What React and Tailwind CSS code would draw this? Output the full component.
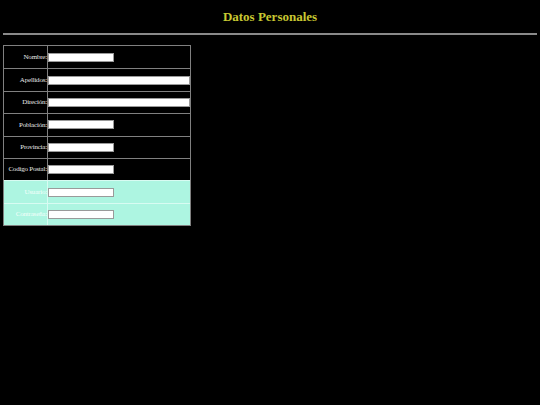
const fields = [
  { label: "Nombre:", wide: false },
  { label: "Apellidos:", wide: true },
  { label: "Direción:", wide: true },
  { label: "Población:", wide: false },
  { label: "Provincia:", wide: false },
  { label: "Codigo Postal:", wide: false },
  { label: "Usuario:", wide: false, alt: true },
  { label: "Contraseña:", wide: false, alt: true, pass: true },
];

export default function App() {
  return (
    <div className="min-h-screen w-full bg-black font-['Liberation_Serif',serif] text-white">
      <h1 className="pt-[9px] text-center text-[13px] font-bold leading-[16px] text-[#c8c832]">
        Datos Personales
      </h1>
      <hr className="mx-[3px] mt-[8px] border-t-2 border-[#8a8a8a]" />

      <div className="ml-[3px] mt-[10px] w-[188px] border border-[#808080]">
        {fields.map((f, i) => (
          <div
            key={f.label}
            className={`flex h-[22.4px] ${i > 0 ? "border-t" : ""} ${
              f.alt ? "border-[#d8fbf2] bg-[#adf5e1]" : "border-[#808080]"
            }`}
          >
            <div
              className={`flex w-[44px] shrink-0 items-center justify-end border-r text-[7px] font-normal tracking-[-0.2px] whitespace-nowrap antialiased ${
                f.alt ? "border-[#d8fbf2] text-[#f4fffb]" : "border-[#808080] text-[#e8e8e8]"
              }`}
            >
              {f.label}
            </div>
            <div className="flex flex-1 items-center">
              <input
                type={f.pass ? "password" : "text"}
                className={`h-[9px] border border-[#9a9a9a] bg-white outline-none ${
                  f.wide ? "w-[142px]" : "w-[66px]"
                }`}
              />
            </div>
          </div>
        ))}
      </div>
    </div>
  );
}
